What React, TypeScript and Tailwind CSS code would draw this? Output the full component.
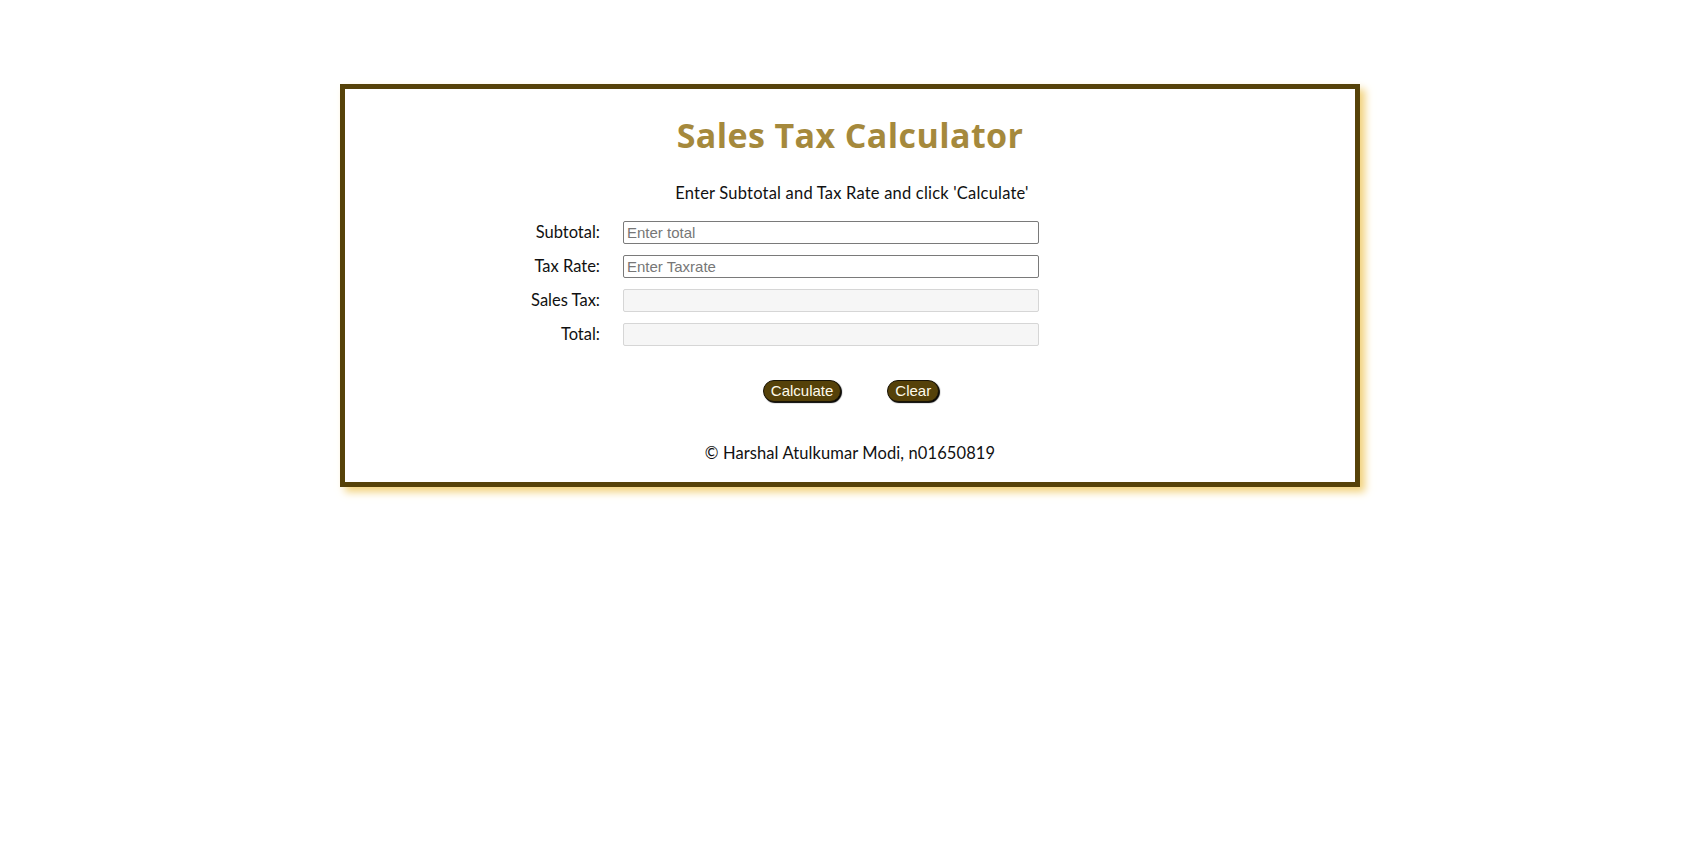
import React from "react";

export default function App() {
  const rows = [
    { label: "Subtotal:", placeholder: "Enter total", disabled: false },
    { label: "Tax Rate:", placeholder: "Enter Taxrate", disabled: false },
    { label: "Sales Tax:", placeholder: "", disabled: true },
    { label: "Total:", placeholder: "", disabled: true },
  ];
  return (
    <div className="min-h-[848px] w-full bg-white pt-[84px] text-[#111]" style={{ fontFamily: "Lato, 'Open Sans', sans-serif" }}>
      <div className="mx-auto w-[1020px] border-[5px] border-[#564209] bg-white shadow-[5px_5px_8px_#f2d27c] pt-[30px] pb-[19px]">
        <h1
          className="text-center text-[34px] leading-[32px] font-bold text-[#a5893c] tracking-[0.4px]"
          style={{ fontFamily: "'Open Sans', Lato, sans-serif" }}
        >
          Sales Tax Calculator
        </h1>
        <p className="mt-[32px] text-center text-[16.5px] leading-[20px] pl-[4px] tracking-[0.2px]">
          Enter Subtotal and Tax Rate and click 'Calculate'
        </p>
        <div className="mt-[18px] grid grid-cols-[255px_416px] gap-x-[23px] gap-y-[11px]">
          {rows.map((r) => (
            <React.Fragment key={r.label}>
              <label className="h-[23px] text-right text-[16.5px] leading-[23px]">{r.label}</label>
              <input
                type="text"
                placeholder={r.placeholder}
                disabled={r.disabled}
                className={
                  r.disabled
                    ? "h-[23px] w-[416px] rounded-[2px] border border-[#d6d6d6] bg-[#f6f6f6] px-[3px] text-[15px] outline-none"
                    : "h-[23px] w-[416px] rounded-[2px] border border-[#7a7a7a] bg-white px-[3px] text-[15px] outline-none placeholder:text-[#777]"
                }
                style={{ fontFamily: "'Liberation Sans', Arial, sans-serif" }}
              />
            </React.Fragment>
          ))}
        </div>
        <div className="mt-[34px] flex justify-center gap-[46px] pl-[2px]">
          <button
            className="h-[22px] rounded-full border border-[#1a1405] bg-[#554109] px-[7px] text-[15px] leading-[20px] text-[#fffbec] shadow-[1px_1px_1px_#000]"
            style={{ fontFamily: "'Liberation Sans', Arial, sans-serif" }}
          >
            Calculate
          </button>
          <button
            className="h-[22px] rounded-full border border-[#1a1405] bg-[#554109] px-[7px] text-[15px] leading-[20px] text-[#fffbec] shadow-[1px_1px_1px_#000]"
            style={{ fontFamily: "'Liberation Sans', Arial, sans-serif" }}
          >
            Clear
          </button>
        </div>
        <p className="mt-[41px] text-center text-[16.5px] leading-[20px] tracking-[0.1px]">
          © Harshal Atulkumar Modi, n01650819
        </p>
      </div>
    </div>
  );
}
